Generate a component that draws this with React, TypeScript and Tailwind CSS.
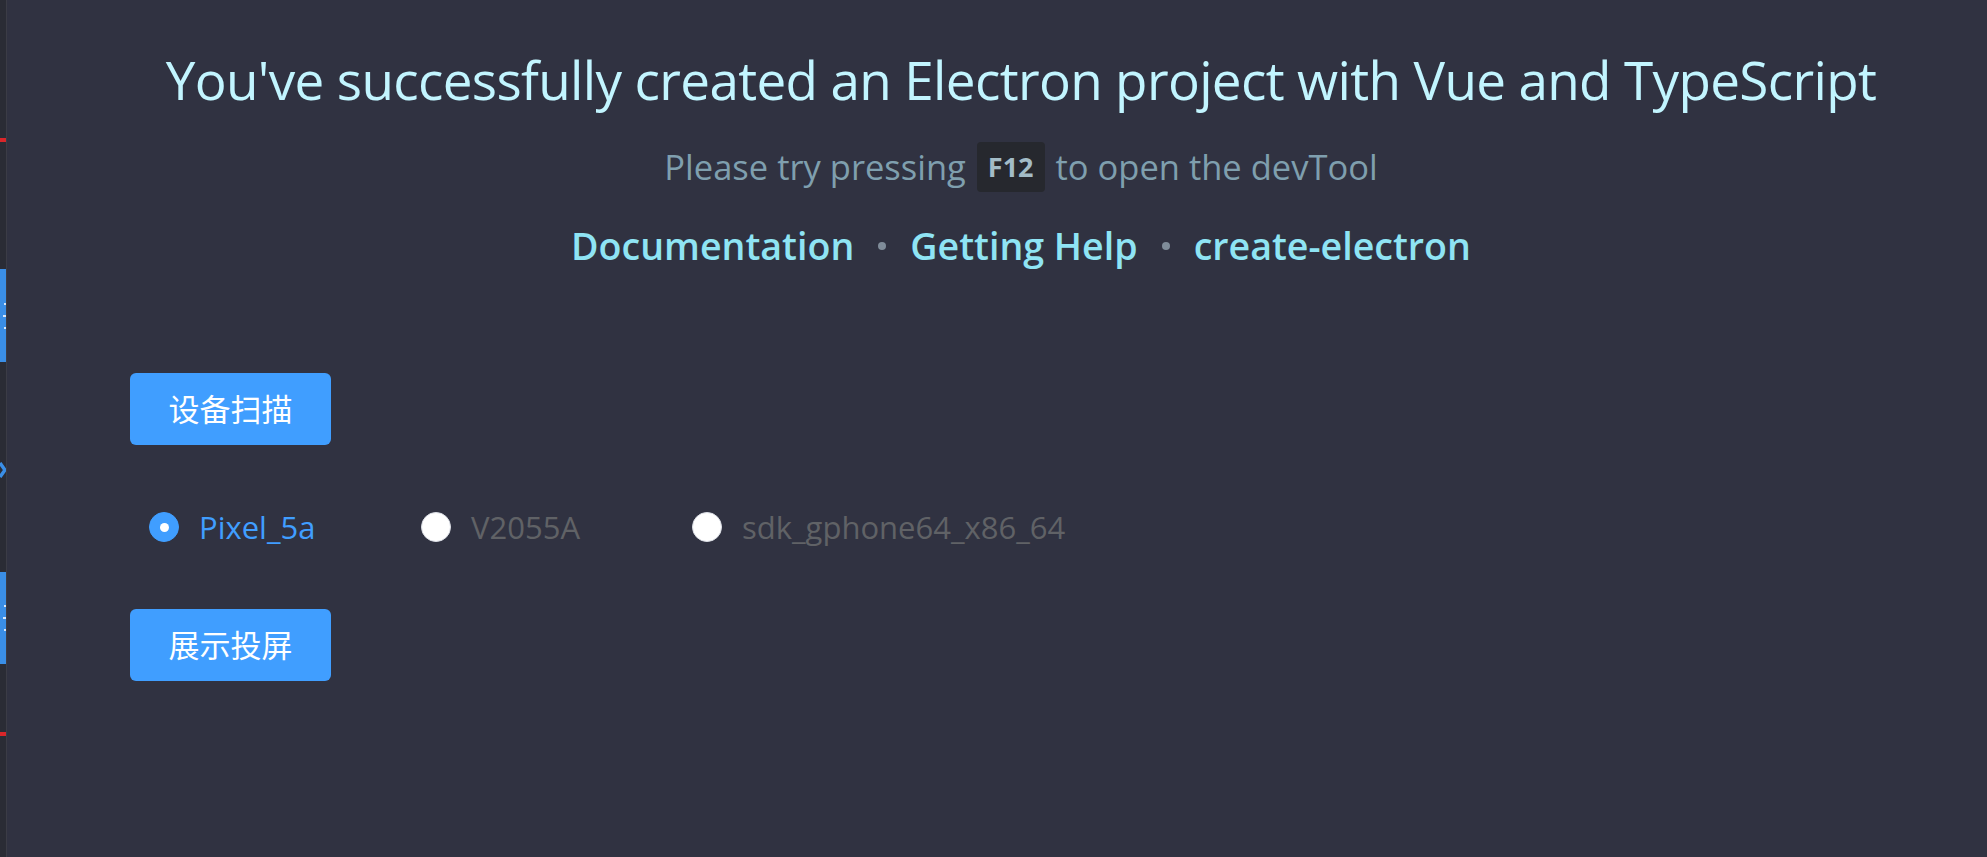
import React from "react";

const FONT = '"Open Sans", "Noto Sans CJK SC", sans-serif';

function Radio({ label, checked, className }: { label: string; checked?: boolean; className?: string }) {
  return (
    <label className={"flex items-center " + (className ?? "")}>
      {checked ? (
        <span className="flex h-[30px] w-[30px] items-center justify-center rounded-full border border-[#409eff] bg-[#409eff]">
          <span className="h-[9px] w-[9px] rounded-full bg-white" />
        </span>
      ) : (
        <span className="h-[30px] w-[30px] rounded-full border border-[#dcdfe6] bg-white" />
      )}
      <span
        className={
          "ml-[20px] text-[31px] leading-[40px] " + (checked ? "text-[#409eff]" : "text-[#606266]")
        }
      >
        {label}
      </span>
    </label>
  );
}

export default function App() {
  return (
    <div className="flex min-h-screen h-[857px] bg-[#303241]" style={{ fontFamily: FONT }}>
      {/* clipped neighbouring pane */}
      <div className="flex w-[7px] shrink-0 flex-col border-r border-[#3b3c46] bg-[#2a2c35]">
        <div className="mt-[138px] h-[4px] w-[6px] bg-[#d9262a]" />
        <div className="mt-[127px] flex h-[93px] w-[6px] flex-col items-end justify-center gap-[10px] bg-[#3a8ee6]">
          <span className="h-[2px] w-[2px] bg-white/80" />
          <span className="h-[2px] w-[3px] bg-white/80" />
          <span className="h-[2px] w-[2px] bg-white/80" />
        </div>
        <div className="mt-[100px] flex h-[16px] w-[6px] items-center">
          <svg width="6" height="16" viewBox="0 0 6 16">
            <path d="M0 1 L5 8 L0 15" stroke="#3a8ee6" strokeWidth="3.5" fill="none" />
          </svg>
        </div>
        <div className="mt-[94px] flex h-[92px] w-[6px] flex-col items-end justify-center gap-[10px] bg-[#3a8ee6]">
          <span className="h-[2px] w-[2px] bg-white/80" />
          <span className="h-[2px] w-[3px] bg-white/80" />
          <span className="h-[2px] w-[2px] bg-white/80" />
        </div>
        <div className="mt-[68px] h-[4px] w-[6px] bg-[#d9262a]" />
      </div>

      <main className="flex-1 pl-[48px] pt-[48px]">
        <div className="flex flex-col items-center">
          <h1 className="text-[53px] font-normal leading-[64px] tracking-[-0.65px] text-[#c2f5ff] whitespace-nowrap">
            You've successfully created an Electron project with Vue and TypeScript
          </h1>
          <p className="mt-[30px] flex h-[50px] items-center text-[34.5px] leading-[50px] text-[#7f9fae] whitespace-nowrap">
            <span>Please try pressing</span>
            <kbd
              className="mx-[11px] flex h-[50px] items-center rounded-[4px] bg-[#26282e] px-[11px] text-[27px] font-bold text-[#a3bcc7]"
              style={{ fontFamily: FONT }}
            >
              F12
            </kbd>
            <span>to open the devTool</span>
          </p>
          <div className="mt-[31px] flex items-center text-[37.6px] font-semibold leading-[46px] text-[#8fe4f4] whitespace-nowrap">
            <a>Documentation</a>
            <span className="mx-[24px] h-[8px] w-[8px] rounded-full bg-[#7f8c99]" />
            <a>Getting Help</a>
            <span className="mx-[24px] h-[8px] w-[8px] rounded-full bg-[#7f8c99]" />
            <a>create-electron</a>
          </div>
        </div>

        <div className="ml-[75px] mt-[104px] flex flex-col items-start">
          <button className="flex h-[72px] w-[201px] items-center justify-center rounded-[6px] bg-[#409eff] text-[31px] text-white">
            设备扫描
          </button>
          <div className="mt-[62px] flex h-[40px] items-center pl-[19px]">
            <Radio label="Pixel_5a" checked className="w-[272px]" />
            <Radio label="V2055A" className="w-[271px]" />
            <Radio label="sdk_gphone64_x86_64" />
          </div>
          <button className="mt-[62px] flex h-[72px] w-[201px] items-center justify-center rounded-[6px] bg-[#409eff] text-[31px] text-white">
            展示投屏
          </button>
        </div>
      </main>
    </div>
  );
}
